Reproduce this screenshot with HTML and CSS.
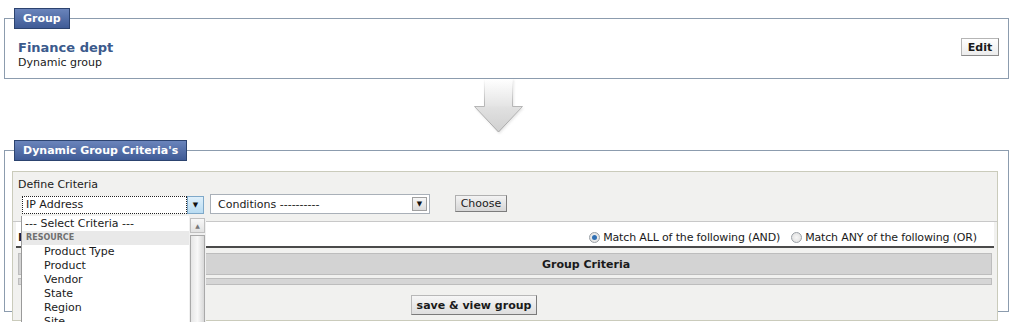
FILE: index.html
```html
<!DOCTYPE html>
<html>
<head>
<meta charset="utf-8">
<link rel="stylesheet" href="styles.css">
</head>
<body>
<fieldset class="panel panel-group">
  <legend class="legend">Group</legend>
  <div class="group-row">
    <div class="group-info">
      <div class="group-name">Finance dept</div>
      <div class="group-type">Dynamic group</div>
    </div>
    <button class="btn btn-edit">Edit</button>
  </div>
</fieldset>

<div class="arrow-wrap">
  <svg class="arrow" width="52" height="56" viewBox="0 0 52 56">
    <defs>
      <linearGradient id="shaft" x1="0" y1="0" x2="0" y2="1">
        <stop offset="0" stop-color="#ffffff"/>
        <stop offset="1" stop-color="#e4e4e4"/>
      </linearGradient>
      <linearGradient id="head" x1="0" y1="0" x2="0" y2="1">
        <stop offset="0" stop-color="#f4f4f4"/>
        <stop offset="1" stop-color="#d0d0d0"/>
      </linearGradient>
      <linearGradient id="edge" x1="0" y1="0" x2="0" y2="1">
        <stop offset="0" stop-color="#ffffff"/>
        <stop offset="0.45" stop-color="#b8b8b8"/>
        <stop offset="1" stop-color="#a8a8a8"/>
      </linearGradient>
      <filter id="sh" x="-20%" y="-20%" width="140%" height="140%">
        <feGaussianBlur stdDeviation="1.2"/>
      </filter>
    </defs>
    <path d="M12 1 H41 V29 H51 L26.5 55 L2 29 H12 Z" fill="#d8d8d8" filter="url(#sh)" opacity="0.6"/>
    <path d="M11.5 0 H39.5 V27.5 H49.5 L25.5 53 L1.5 27.5 H11.5 Z" fill="url(#head)" stroke="url(#edge)" stroke-width="1"/>
    <rect x="12" y="0" width="27" height="27.5" fill="url(#shaft)"/>
  </svg>
</div>

<fieldset class="panel panel-criteria">
  <legend class="legend">Dynamic Group Criteria's</legend>
  <div class="criteria-box">
    <div class="define-section">
      <div class="define-label">Define Criteria</div>
      <div class="define-row">
        <div class="select select-criteria">
          <span class="select-text focused">IP Address</span>
          <span class="select-btn blue">&#9660;</span>
        </div>
        <div class="select select-cond">
          <span class="select-text">Conditions ----------</span>
          <span class="select-btn gray">&#9660;</span>
        </div>
        <button class="btn btn-choose">Choose</button>
      </div>
    </div>
    <div class="match-row">
      <span class="match-label">Include</span>
      <label class="radio"><span class="radio-dot checked"></span>Match ALL of the following (AND)</label>
      <label class="radio"><span class="radio-dot"></span>Match ANY of the following (OR)</label>
    </div>
    <div class="table-area">
      <div class="table-head">Group Criteria</div>
      <div class="table-foot"></div>
    </div>
    <div class="save-row">
      <button class="btn btn-save">save &amp; view group</button>
    </div>

    <div class="dropdown">
      <div class="dd-list">
        <div class="dd-item dd-first">--- Select Criteria ---</div>
        <div class="dd-group">RESOURCE</div>
        <div class="dd-item dd-sub">Product Type</div>
        <div class="dd-item dd-sub">Product</div>
        <div class="dd-item dd-sub">Vendor</div>
        <div class="dd-item dd-sub">State</div>
        <div class="dd-item dd-sub">Region</div>
        <div class="dd-item dd-sub">Site</div>
      </div>
      <div class="dd-scroll">
        <div class="dd-up">&#9650;</div>
        <div class="dd-thumb"></div>
      </div>
    </div>
  </div>
</fieldset>
</body>
</html>
```
FILE: styles.css
```css
html, body {
  margin: 0;
  padding: 0;
  background: #ffffff;
  height: 322px;
  overflow: hidden;
}
body {
  font-family: "DejaVu Sans", sans-serif;
  font-size: 11px;
  color: #1a1a1a;
}
.panel {
  margin: 0 15px 0 4px;
  border: 1px solid #8c9cae;
  min-width: 0;
}
.legend {
  background: linear-gradient(#6a84bb, #3f5b96);
  border: 1px solid #2c436f;
  color: #ffffff;
  font-weight: bold;
  font-size: 11px;
  line-height: 19px;
  padding: 0 8px;
  box-sizing: border-box;
  height: 21px;
}
.panel-group {
  margin-top: 8px;
  padding: 10px 9px 9px 13px;
}
.panel-group .legend {
  margin-left: -4px;
}
.group-row {
  display: flex;
  justify-content: space-between;
  align-items: flex-start;
}
.group-name {
  font-weight: bold;
  font-size: 13px;
  color: #3b5a8c;
  line-height: 17px;
}
.group-type {
  font-size: 11px;
  line-height: 13px;
}
.btn {
  font-family: "DejaVu Sans", sans-serif;
  font-size: 11px;
  color: #1a1a1a;
  padding: 0;
  cursor: pointer;
}
.btn-edit {
  margin-top: -1px;
  width: 38px;
  height: 18px;
  font-weight: bold;
  background: linear-gradient(#ffffff, #ececec);
  border: 1px solid #b5b5b5;
  border-right-color: #8a8a8a;
  border-bottom-color: #8a8a8a;
}
.arrow-wrap {
  display: flex;
  justify-content: center;
  height: 61px;
}
.arrow {
  margin-left: -26px;
}
.panel-criteria {
  padding: 10px 10px 0 7px;
  height: 172px;
  box-sizing: border-box;
}
.panel-criteria .legend {
  margin-left: 2px;
}
.criteria-box {
  position: relative;
  background: #f1f1ef;
  border: 1px solid #cacbbb;
  height: 150px;
  box-sizing: border-box;
}
.define-section {
  padding: 6px 0 0 5px;
  height: 50px;
  box-sizing: border-box;
  border-bottom: 1px solid #c8c8c8;
}
.define-label {
  line-height: 14px;
}
.define-row {
  display: flex;
  align-items: flex-start;
  margin-top: 3px;
  margin-left: 4px;
}
.select {
  display: flex;
  background: #ffffff;
  box-sizing: border-box;
}
.select-criteria {
  width: 182px;
  height: 18px;
  margin-top: 1px;
}
.select-text {
  flex: 1;
  line-height: 16px;
  padding-left: 3px;
  white-space: nowrap;
  overflow: hidden;
}
.select-text.focused {
  border: 1px dotted #222;
  line-height: 14px;
  padding-top: 1px;
}
.select-btn {
  font-size: 7px;
  display: flex;
  align-items: center;
  justify-content: center;
  box-sizing: border-box;
  color: #111;
}
.select-btn.blue {
  width: 17px;
  background: linear-gradient(#dff0fb, #b9dcf2);
  border: 1px solid #7fa9c9;
}
.select-cond {
  width: 220px;
  height: 20px;
  margin-left: 6px;
  margin-top: -1px;
  border: 1px solid #a9b0b8;
  padding: 2px 2px 2px 0;
}
.select-cond .select-text {
  padding-left: 7px;
  line-height: 15px;
}
.select-btn.gray {
  width: 15px;
  background: linear-gradient(#f7f7f7, #dcdcdc);
  border: 1px solid #a0a0a0;
}
.btn-choose {
  margin-left: 25px;
  margin-top: 0;
  width: 52px;
  height: 17px;
  background: linear-gradient(#f3f3f3, #d6d6d6);
  border: 1px solid #b0b0b0;
  border-right-color: #7c7c7c;
  border-bottom-color: #7c7c7c;
}
.match-row {
  display: flex;
  align-items: flex-end;
  background: #ffffff;
  height: 26px;
  box-sizing: border-box;
  margin: 0 3px 0 3px;
  border-bottom: 2px solid #4a4a4a;
  padding: 0 17px 2px 0;
  line-height: 13px;
}
.match-label {
  font-weight: bold;
  margin-left: 2px;
  margin-right: auto;
}
.radio {
  display: flex;
  align-items: center;
  margin-left: 11px;
  letter-spacing: -0.15px;
}
.radio-dot {
  width: 11px;
  height: 11px;
  border-radius: 50%;
  border: 1px solid #9aa0a6;
  background: radial-gradient(circle, #f6f6f6 0, #dcdcdc 100%);
  margin-right: 3px;
  box-sizing: border-box;
  position: relative;
}
.radio-dot.checked::after {
  content: "";
  position: absolute;
  left: 2px;
  top: 2px;
  width: 5px;
  height: 5px;
  border-radius: 50%;
  background: #2f6fb3;
}
.table-area {
  margin: 5px 5px 0 5px;
}
.table-head {
  height: 22px;
  background: #d3d3d3;
  border: 1px solid #bdbdbd;
  box-sizing: border-box;
  font-weight: bold;
  line-height: 21px;
  padding-left: 523px;
}
.table-foot {
  height: 7px;
  margin-top: 3px;
  background: #d6d6d6;
  border: 1px solid #bdbdbd;
  box-sizing: border-box;
}
.save-row {
  display: flex;
  padding: 10px 0 0 398px;
}
.btn-save {
  width: 126px;
  height: 20px;
  font-weight: bold;
  background: linear-gradient(#f6f6f6, #dedede);
  border: 1px solid #b8b8b8;
  border-right-color: #7a7a7a;
  border-bottom-color: #7a7a7a;
}
.dropdown {
  position: absolute;
  left: 8px;
  top: 44px;
  width: 184px;
  height: 120px;
  background: #ffffff;
  border-left: 1px solid #9a9a9a;
  display: flex;
}
.dd-list {
  flex: 1;
  overflow: hidden;
}
.dd-item {
  line-height: 14px;
  height: 14px;
  white-space: nowrap;
}
.dd-first {
  padding-left: 3px;
  margin-top: 1px;
}
.dd-group {
  background: #e9e9e9;
  color: #707070;
  font-weight: bold;
  font-size: 8px;
  height: 14px;
  line-height: 14px;
  padding-left: 4px;
}
.dd-sub {
  padding-left: 22px;
}
.dd-scroll {
  width: 17px;
  background: #f0f0f0;
  display: flex;
  flex-direction: column;
  align-items: center;
  padding-top: 2px;
}
.dd-up {
  width: 15px;
  height: 15px;
  font-size: 6px;
  color: #777;
  background: linear-gradient(#f8f8f8, #e2e2e2);
  border: 1px solid #c0c0c0;
  box-sizing: border-box;
  display: flex;
  align-items: center;
  justify-content: center;
}
.dd-thumb {
  width: 15px;
  flex: 1;
  margin-top: 2px;
  background: linear-gradient(90deg, #e6e6e6, #f8f8f8 50%, #d8d8d8);
  border: 1px solid #a9a9a9;
  box-sizing: border-box;
}
```
